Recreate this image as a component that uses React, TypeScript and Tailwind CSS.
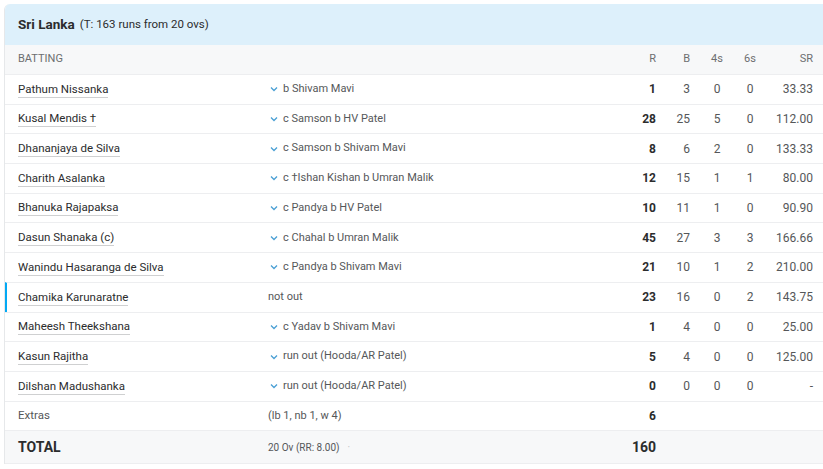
import React from "react";

type Batter = {
  name: string;
  out: string;
  chevron: boolean;
  r: string;
  b: string;
  fours: string;
  sixes: string;
  sr: string;
  active?: boolean;
};

const batters: Batter[] = [
  { name: "Pathum Nissanka", out: "b Shivam Mavi", chevron: true, r: "1", b: "3", fours: "0", sixes: "0", sr: "33.33" },
  { name: "Kusal Mendis †", out: "c Samson b HV Patel", chevron: true, r: "28", b: "25", fours: "5", sixes: "0", sr: "112.00" },
  { name: "Dhananjaya de Silva", out: "c Samson b Shivam Mavi", chevron: true, r: "8", b: "6", fours: "2", sixes: "0", sr: "133.33" },
  { name: "Charith Asalanka", out: "c †Ishan Kishan b Umran Malik", chevron: true, r: "12", b: "15", fours: "1", sixes: "1", sr: "80.00" },
  { name: "Bhanuka Rajapaksa", out: "c Pandya b HV Patel", chevron: true, r: "10", b: "11", fours: "1", sixes: "0", sr: "90.90" },
  { name: "Dasun Shanaka (c)", out: "c Chahal b Umran Malik", chevron: true, r: "45", b: "27", fours: "3", sixes: "3", sr: "166.66" },
  { name: "Wanindu Hasaranga de Silva", out: "c Pandya b Shivam Mavi", chevron: true, r: "21", b: "10", fours: "1", sixes: "2", sr: "210.00" },
  { name: "Chamika Karunaratne", out: "not out", chevron: false, r: "23", b: "16", fours: "0", sixes: "2", sr: "143.75", active: true },
  { name: "Maheesh Theekshana", out: "c Yadav b Shivam Mavi", chevron: true, r: "1", b: "4", fours: "0", sixes: "0", sr: "25.00" },
  { name: "Kasun Rajitha", out: "run out (Hooda/AR Patel)", chevron: true, r: "5", b: "4", fours: "0", sixes: "0", sr: "125.00" },
  { name: "Dilshan Madushanka", out: "run out (Hooda/AR Patel)", chevron: true, r: "0", b: "0", fours: "0", sixes: "0", sr: "-" },
];

const Chevron = () => (
  <svg width="8" height="6" viewBox="0 0 8 6" className="ml-[2px] mr-[5px] shrink-0">
    <polyline points="1,1.5 4,4.5 7,1.5" fill="none" stroke="#4a9fd4" strokeWidth="1.3" />
  </svg>
);

const App = () => {
  return (
    <div className="h-[469px] w-[823px] overflow-hidden bg-white pl-1 pt-1 font-['Roboto',sans-serif] text-[12px] text-[#2b2c2d]">
      <div className="overflow-hidden rounded-tl-md border-l border-[#e6e8ea]">
        <div className="flex h-[41px] items-center bg-[#ddf0fb] pl-[13px]">
          <span className="text-[13.5px] font-bold">Sri Lanka</span>
          <span className="ml-[5px] text-[11.5px] text-[#2b2c2d]">(T: 163 runs from 20 ovs)</span>
        </div>

        <div className="flex h-[29px] items-center bg-[#f7f8f9] pl-[13px] pr-[10px] text-[11px] text-[#6c6e70]">
          <div className="w-[249px]">BATTING</div>
          <div className="flex-1" />
          <div className="w-[40px] text-right">R</div>
          <div className="w-[34px] text-right">B</div>
          <div className="ml-[10px] w-[34px] text-center">4s</div>
          <div className="w-[32px] text-center">6s</div>
          <div className="w-[47px] text-right">SR</div>
        </div>

        {batters.map((p) => (
          <div
            key={p.name}
            className={`flex h-[29.7px] items-center border-t border-[#edeef0] pr-[10px] ${p.active ? "border-l-2 border-l-[#03a9f4] pl-[11px]" : "pl-[13px]"}`}
          >
            <div className="w-[250px] text-[11.5px]">
              <span className="border-b border-[#cfd0d1] pb-px">{p.name}</span>
            </div>
            <div className="flex flex-1 items-center text-[11px] text-[#555759]">
              {p.chevron && <Chevron />}
              {p.out}
            </div>
            <div className="w-[40px] text-right font-bold">{p.r}</div>
            <div className="w-[34px] text-right text-[#555759]">{p.b}</div>
            <div className="ml-[10px] w-[34px] text-center text-[#555759]">{p.fours}</div>
            <div className="w-[32px] text-center text-[#555759]">{p.sixes}</div>
            <div className="w-[47px] text-right text-[#555759]">{p.sr}</div>
          </div>
        ))}

        <div className="flex h-[29.7px] items-center border-t border-[#edeef0] pl-[13px] pr-[10px]">
          <div className="w-[250px] text-[11.5px] text-[#555759]">Extras</div>
          <div className="flex-1 text-[11px] text-[#555759]">(lb 1, nb 1, w 4)</div>
          <div className="w-[40px] text-right font-bold">6</div>
          <div className="w-[157px]" />
        </div>

        <div className="flex h-[34px] items-center border-y border-[#edeef0] bg-[#f7f8f9] pl-[13px] pr-[10px]">
          <div className="w-[250px] text-[14px] font-bold">TOTAL</div>
          <div className="flex flex-1 items-center text-[10px] text-[#555759]">
            20 Ov (RR: 8.00)
            <span className="ml-[8px] text-[#c0c2c4]">·</span>
          </div>
          <div className="w-[40px] text-right text-[14px] font-bold">160</div>
          <div className="w-[157px]" />
        </div>
      </div>
    </div>
  );
};

export default App;
